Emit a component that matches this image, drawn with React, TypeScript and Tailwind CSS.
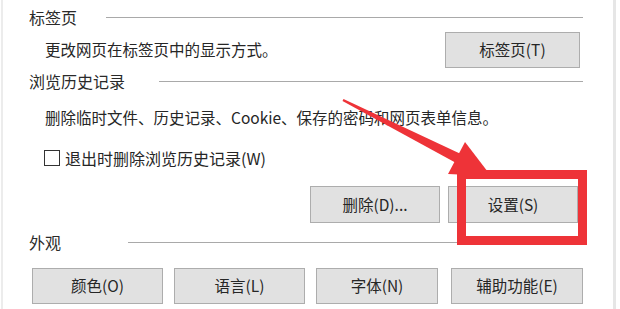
import React from "react";

const font = { fontFamily: '"Microsoft YaHei", "Noto Sans CJK SC", "Noto Sans", sans-serif' };

function Btn({ label, className }: { label: string; className: string }) {
  return (
    <div
      className={`flex items-center justify-center border border-[#adadad] bg-[#e1e1e1] text-[15.5px] text-[#262626] ${className}`}
    >
      {label}
    </div>
  );
}

function Heading({ label, lineStart }: { label: string; lineStart: string }) {
  return (
    <div className="flex items-center h-[18px]">
      <span className={`text-[16px] leading-none text-[#2a2a2a] ${lineStart}`}>{label}</span>
      <div className="flex-1 h-px bg-[#a9a9a9] mr-[30px]" />
    </div>
  );
}

export default function App() {
  return (
    <div className="relative w-[620px] h-[309px] bg-white overflow-hidden" style={font}>
      <div className="flex h-full">
        <div className="w-[2px] bg-[#ececec] ml-[1px]" />
        <div className="flex-1 flex flex-col pl-[26px]">
          <div className="mt-[8px]">
            <Heading label="标签页" lineStart="w-[77px]" />
          </div>
          <div className="mt-[6px] h-[36px] flex items-center">
            <span className="ml-[16px] text-[15.5px] text-[#262626]">更改网页在标签页中的显示方式。</span>
            <Btn label="标签页(T)" className="ml-auto mr-[33px] w-[135px] h-[36px]" />
          </div>
          <div className="mt-[4px]">
            <Heading label="浏览历史记录" lineStart="w-[130px]" />
          </div>
          <div className="mt-[18px] h-[20px] flex items-center">
            <span className="ml-[16px] text-[15.5px] text-[#262626]">
              删除临时文件、历史记录、Cookie、保存的密码和网页表单信息。
            </span>
          </div>
          <div className="mt-[20px] h-[20px] flex items-center">
            <div className="ml-[15px] w-[16px] h-[16px] border border-[#333] bg-white" />
            <span className="ml-[5px] text-[16px] text-[#262626]">退出时删除浏览历史记录(W)</span>
          </div>
          <div className="mt-[18px] h-[37px] flex">
            <Btn label="删除(D)..." className="ml-[281px] w-[130px] h-[37px]" />
            <Btn label="设置(S)" className="ml-[8px] w-[130px] h-[37px]" />
          </div>
          <div className="mt-[10px]">
            <Heading label="外观" lineStart="w-[99px]" />
          </div>
          <div className="mt-[17px] h-[36px] flex">
            <Btn label="颜色(O)" className="ml-[3px] w-[131px] h-[36px]" />
            <Btn label="语言(L)" className="ml-[11px] w-[131px] h-[36px]" />
            <Btn label="字体(N)" className="ml-[11px] w-[122px] h-[36px]" />
            <Btn label="辅助功能(E)" className="ml-[13px] w-[132px] h-[36px]" />
          </div>
        </div>
        <div className="w-[3px] bg-[#e6e6e6] mr-[4px]" />
      </div>

      <svg className="absolute left-0 top-0" width="620" height="309" viewBox="0 0 620 309">
        <polygon points="343.5,99 342.5,101 458,164 463,155" fill="#ee3338" />
        <polygon points="465,142 448,174 491,176" fill="#ee3338" />
      </svg>
      <div className="absolute left-[457px] top-[170px] w-[130px] h-[75px] border-[9px] border-[#ee3338]" />
    </div>
  );
}
